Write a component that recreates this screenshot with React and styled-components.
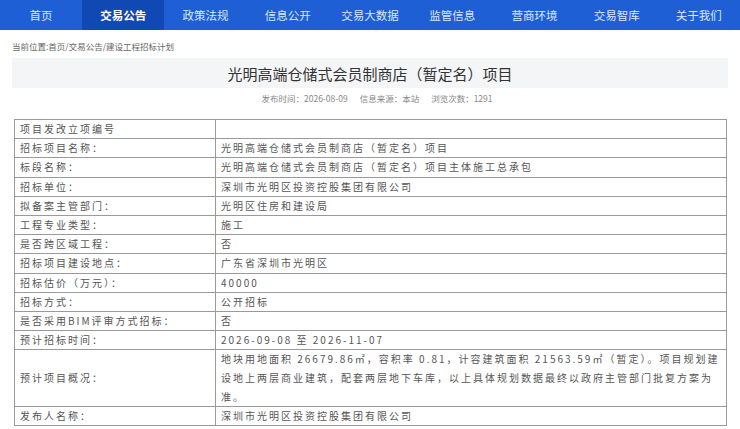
import React from "react";
import styled, { createGlobalStyle } from "styled-components";

const GlobalStyle = createGlobalStyle`
  body {
    margin: 0;
    background: #fff;
    font-family: "Noto Sans CJK SC", "Noto Sans", sans-serif;
    color: #333;
  }
`;

const Page = styled.div`
  width: 740px;
  height: 429px;
  overflow: hidden;
  background: #fff;
`;

const NavBar = styled.nav`
  display: flex;
  height: 30px;
  background: #1f5fd5;
`;

const NavItem = styled.div`
  flex: 1;
  display: flex;
  align-items: center;
  justify-content: center;
  font-size: 11.5px;
  color: ${(p) => (p.active ? "#ffffff" : "#dbe6fb")};
  font-weight: ${(p) => (p.active ? 700 : 400)};
  background: ${(p) => (p.active ? "#1049b3" : "transparent")};
`;

const Crumb = styled.div`
  padding: 10px 0 0 12px;
  height: 18px;
  font-size: 8.5px;
  color: #666;
`;

const TitleBox = styled.div`
  margin: 0 12px;
  height: 30px;
  display: flex;
  align-items: center;
  justify-content: center;
  background: #f4f5f7;
  font-size: 15px;
  color: #333;
`;

const Meta = styled.div`
  display: flex;
  justify-content: center;
  gap: 12px;
  padding-top: 4px;
  height: 16px;
  font-size: 8.5px;
  color: #888;
  padding-left: 14px;
`;

const Table = styled.table`
  margin: 11px 0 0 14px;
  width: 713px;
  border-collapse: collapse;
  border: 1px solid #8a8a8a;
  font-size: 10px;
  letter-spacing: 2px;
  color: #555;
`;

const Label = styled.td`
  width: 190px;
  height: 18.2px;
  padding: 0 5px;
  border: 1px solid #9a9a9a;
  vertical-align: middle;
  line-height: 18.2px;
  white-space: nowrap;
`;

const Value = styled.td`
  padding: 0 5px;
  border: 1px solid #9a9a9a;
  vertical-align: middle;
  line-height: ${(p) => (p.multi ? "18.6px" : "18.2px")};
`;

const rows = [
  ["项目发改立项编号", ""],
  ["招标项目名称：", "光明高端仓储式会员制商店（暂定名）项目"],
  ["标段名称：", "光明高端仓储式会员制商店（暂定名）项目主体施工总承包"],
  ["招标单位：", "深圳市光明区投资控股集团有限公司"],
  ["拟备案主管部门：", "光明区住房和建设局"],
  ["工程专业类型：", "施工"],
  ["是否跨区域工程：", "否"],
  ["招标项目建设地点：", "广东省深圳市光明区"],
  ["招标估价（万元）：", "40000"],
  ["招标方式：", "公开招标"],
  ["是否采用BIM评审方式招标：", "否"],
  ["预计招标时间：", "2026-09-08 至 2026-11-07"],
  [
    "预计项目概况：",
    "地块用地面积 26679.86㎡，容积率 0.81，计容建筑面积 21563.59㎡（暂定）。项目规划建设地上两层商业建筑，配套两层地下车库，以上具体规划数据最终以政府主管部门批复方案为准。",
    true,
  ],
  ["发布人名称：", "深圳市光明区投资控股集团有限公司"],
];

const navs = ["首页", "交易公告", "政策法规", "信息公开", "交易大数据", "监管信息", "营商环境", "交易智库", "关于我们"];

export default function App() {
  return (
    <Page>
      <GlobalStyle />
      <NavBar>
        {navs.map((n) => (
          <NavItem key={n} active={n === "交易公告"}>
            {n}
          </NavItem>
        ))}
      </NavBar>
      <Crumb>当前位置:首页/交易公告/建设工程招标计划</Crumb>
      <TitleBox>光明高端仓储式会员制商店（暂定名）项目</TitleBox>
      <Meta>
        <span>发布时间：2026-08-09</span>
        <span>信息来源：本站</span>
        <span>浏览次数：1291</span>
      </Meta>
      <Table>
        <tbody>
          {rows.map(([k, v, multi]) => (
            <tr key={k}>
              <Label>{k}</Label>
              <Value multi={multi}>{v}</Value>
            </tr>
          ))}
        </tbody>
      </Table>
    </Page>
  );
}
